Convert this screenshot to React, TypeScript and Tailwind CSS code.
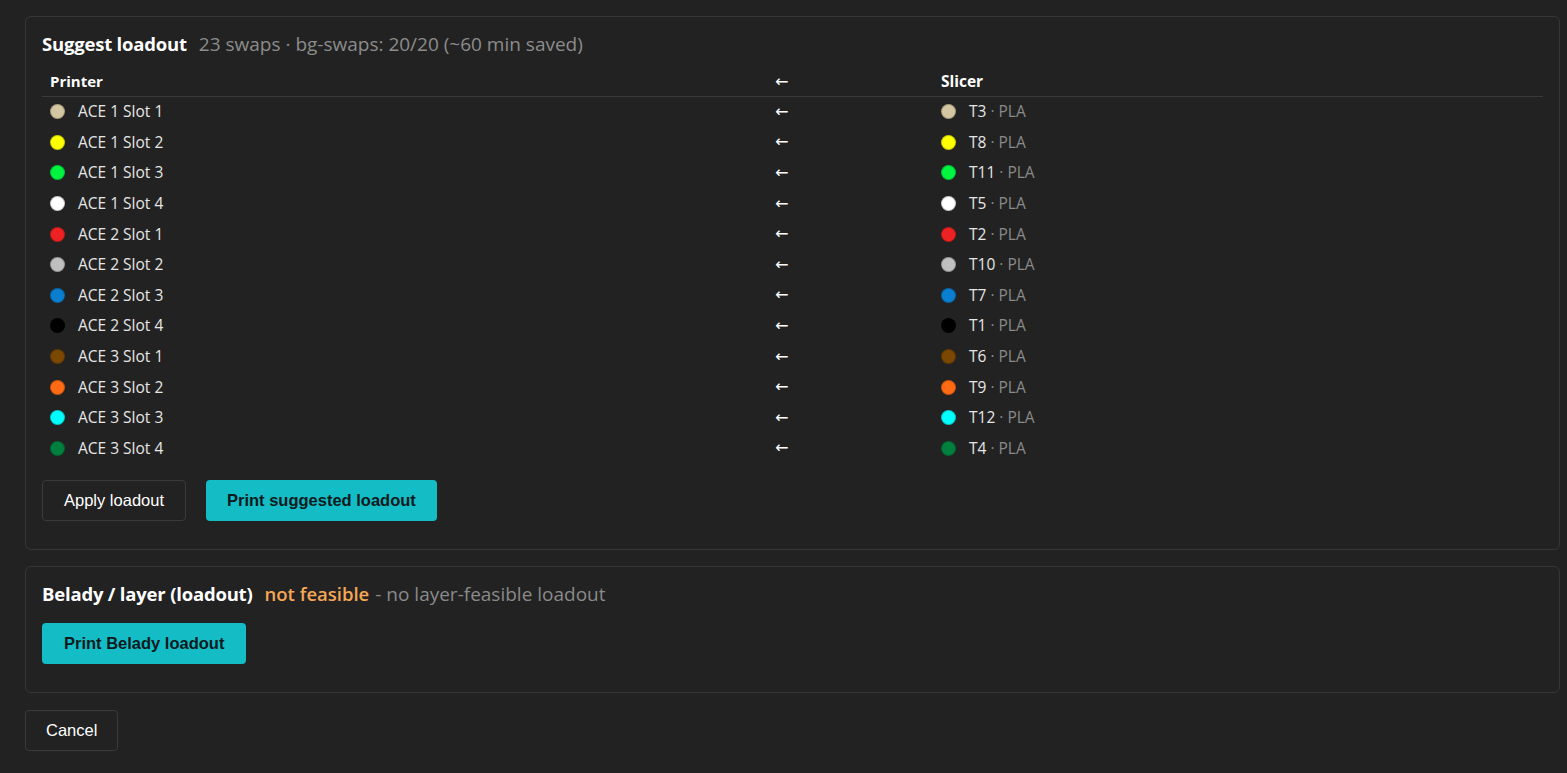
import React from 'react';

type Row = { slot: string; slotColor: string; tool: string; toolColor: string; mat: string };

const rows: Row[] = [
  { slot: 'ACE 1 Slot 1', slotColor: '#d5c6a2', tool: 'T3', toolColor: '#d5c6a2', mat: 'PLA' },
  { slot: 'ACE 1 Slot 2', slotColor: '#ffff00', tool: 'T8', toolColor: '#ffff00', mat: 'PLA' },
  { slot: 'ACE 1 Slot 3', slotColor: '#00f540', tool: 'T11', toolColor: '#00f540', mat: 'PLA' },
  { slot: 'ACE 1 Slot 4', slotColor: '#ffffff', tool: 'T5', toolColor: '#ffffff', mat: 'PLA' },
  { slot: 'ACE 2 Slot 1', slotColor: '#ee2222', tool: 'T2', toolColor: '#ee2222', mat: 'PLA' },
  { slot: 'ACE 2 Slot 2', slotColor: '#c0c0c0', tool: 'T10', toolColor: '#c0c0c0', mat: 'PLA' },
  { slot: 'ACE 2 Slot 3', slotColor: '#0a7fd0', tool: 'T7', toolColor: '#0a7fd0', mat: 'PLA' },
  { slot: 'ACE 2 Slot 4', slotColor: '#000000', tool: 'T1', toolColor: '#000000', mat: 'PLA' },
  { slot: 'ACE 3 Slot 1', slotColor: '#7a4800', tool: 'T6', toolColor: '#7a4800', mat: 'PLA' },
  { slot: 'ACE 3 Slot 2', slotColor: '#ff6a13', tool: 'T9', toolColor: '#ff6a13', mat: 'PLA' },
  { slot: 'ACE 3 Slot 3', slotColor: '#00ffff', tool: 'T12', toolColor: '#00ffff', mat: 'PLA' },
  { slot: 'ACE 3 Slot 4', slotColor: '#00803e', tool: 'T4', toolColor: '#00803e', mat: 'PLA' },
];

const Dot = ({ color }: { color: string }) => (
  <span
    className="inline-block w-[15px] h-[15px] rounded-full border border-black/20 shrink-0"
    style={{ backgroundColor: color }}
  />
);

const Arrow = () => (
  <span className="text-[16px] text-white" style={{ fontFamily: '"DejaVu Sans", sans-serif' }}>
    ←
  </span>
);

const btnFont = { fontFamily: '"Liberation Sans", Arial, sans-serif' };

export default function App() {
  return (
    <div
      className="min-h-[773px] bg-[#222222] text-[#e6e6e6] pl-[25px] pr-[7px] pt-[16px] pb-[20px]"
      style={{ fontFamily: '"Open Sans", "Noto Sans", sans-serif' }}
    >
      {/* Suggest loadout */}
      <div className="border border-[#363636] rounded-md px-4 pt-[13px] pb-[28px]">
        <div className="flex items-baseline gap-3 mb-[9px]">
          <h3 className="text-[18.5px] font-bold text-white tracking-[-0.2px]">Suggest loadout</h3>
          <span className="text-[19px] text-[#8c8c8c]">
            23 swaps · bg-swaps: 20/20 (~60 min saved)
          </span>
        </div>

        <div className="grid grid-cols-[725px_166px_1fr] text-[15.5px]">
          <div className="px-2 h-[29px] flex items-center text-[15px] font-bold text-white border-b border-[#3a3a3a]">Printer</div>
          <div className="px-2 h-[29px] flex items-center border-b border-[#3a3a3a]"><Arrow /></div>
          <div className="px-2 h-[29px] flex items-center text-[15.5px] font-bold text-white border-b border-[#3a3a3a]">Slicer</div>

          {rows.map((r) => (
            <React.Fragment key={r.slot}>
              <div className="px-2 h-[30.6px] flex items-center gap-[13px]">
                <Dot color={r.slotColor} />
                <span>{r.slot}</span>
              </div>
              <div className="px-2 h-[30.6px] flex items-center"><Arrow /></div>
              <div className="px-2 h-[30.6px] flex items-center gap-[13px]">
                <Dot color={r.toolColor} />
                <span>
                  {r.tool} <span className="text-[#8a8a8a]">· {r.mat}</span>
                </span>
              </div>
            </React.Fragment>
          ))}
        </div>

        <div className="flex gap-5 mt-[16px]" style={btnFont}>
          <button className="h-[41px] px-[21px] rounded-[4px] border border-[#3a3a3a] text-[16.5px] text-white">
            Apply loadout
          </button>
          <button className="h-[41px] px-[21px] rounded-[4px] bg-[#14bcc6] text-[16.5px] font-bold text-[#0b1a1c]">
            Print suggested loadout
          </button>
        </div>
      </div>

      {/* Belady */}
      <div className="border border-[#363636] rounded-md px-4 pt-[13px] pb-[28px] mt-[16px]">
        <div className="flex items-baseline mb-[15px] text-[18.5px]">
          <span className="font-bold text-white tracking-[-0.2px]">Belady / layer (loadout)</span>
          <span className="ml-3 font-semibold text-[#f5a656]">not feasible</span>
          <span className="ml-[6px] text-[19px] text-[#8a8a8a]">- no layer-feasible loadout</span>
        </div>
        <button
          className="h-[41px] px-[22px] rounded-[4px] bg-[#14bcc6] text-[16.5px] font-bold text-[#0b1a1c]"
          style={btnFont}
        >
          Print Belady loadout
        </button>
      </div>

      <button
        className="mt-[17px] h-[41px] px-[20px] rounded-[4px] border border-[#3a3a3a] text-[16.5px] text-white"
        style={btnFont}
      >
        Cancel
      </button>
    </div>
  );
}
